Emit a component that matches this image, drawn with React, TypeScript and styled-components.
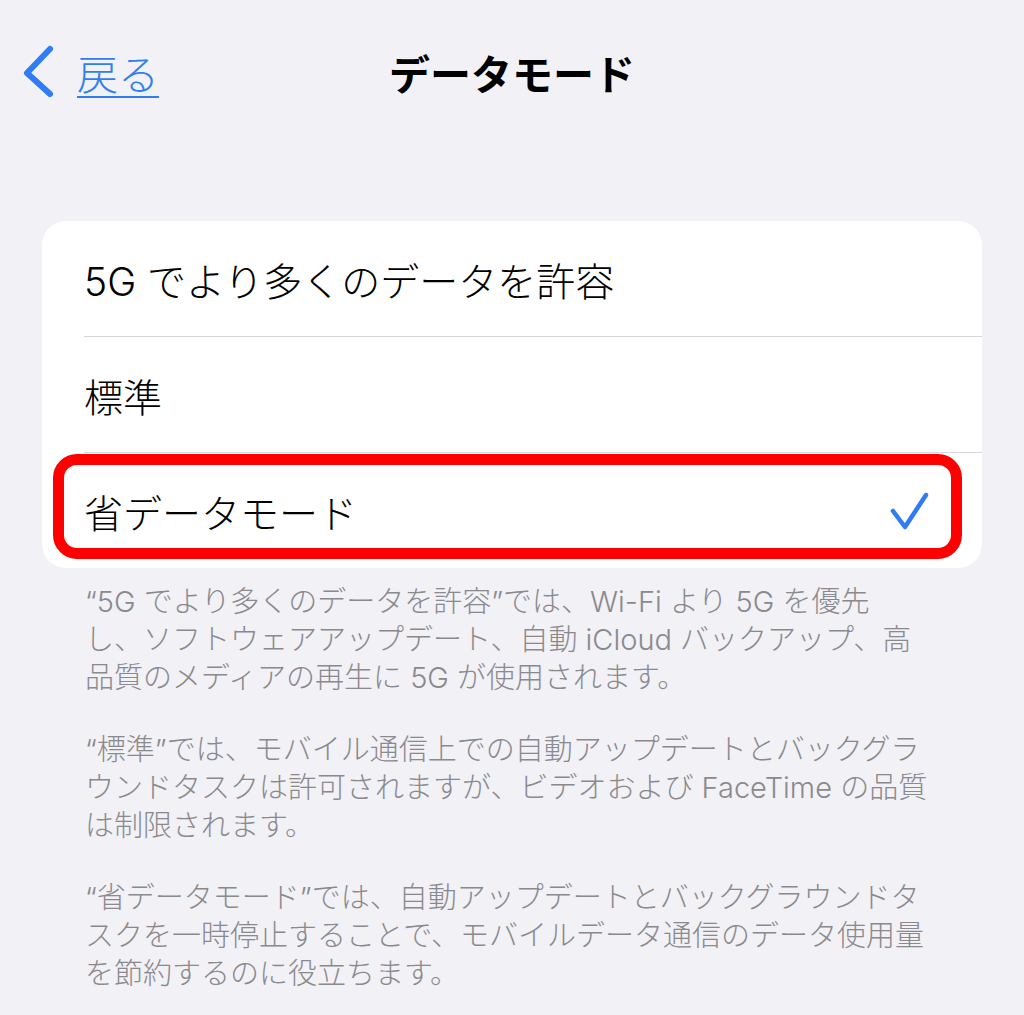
import { FC } from "react";
import styled, { createGlobalStyle } from "styled-components";

const GlobalStyle = createGlobalStyle`
  body {
    margin: 0;
    background: #f2f1f6;
    font-family: Inter, "Noto Sans CJK JP", sans-serif;
    -webkit-font-smoothing: antialiased;
  }
`;

type Option = { label: string; selected?: boolean };

const options: Option[] = [
  { label: "5G でより多くのデータを許容" },
  { label: "標準" },
  { label: "省データモード", selected: true },
];

const notes: string[][] = [
  [
    "“5G でより多くのデータを許容”では、Wi-Fi より 5G を優先",
    "し、ソフトウェアアップデート、自動 iCloud バックアップ、高",
    "品質のメディアの再生に 5G が使用されます。",
  ],
  [
    "“標準”では、モバイル通信上での自動アップデートとバックグラ",
    "ウンドタスクは許可されますが、ビデオおよび FaceTime の品質",
    "は制限されます。",
  ],
  [
    "“省データモード”では、自動アップデートとバックグラウンドタ",
    "スクを一時停止することで、モバイルデータ通信のデータ使用量",
    "を節約するのに役立ちます。",
  ],
];

const ChevronLeft: FC = () => (
  <svg width="34" height="54" viewBox="0 0 34 54" fill="none">
    <path
      d="M28 4 L5 28 L28 49"
      stroke="#2f7cf6"
      strokeWidth="6"
      strokeLinecap="round"
      strokeLinejoin="round"
    />
  </svg>
);

const Check: FC = () => (
  <svg width="44" height="44" viewBox="0 0 44 44" fill="none">
    <path
      d="M5 22 L17 38 L38 6"
      stroke="#2f7cf6"
      strokeWidth="4.5"
      strokeLinecap="round"
      strokeLinejoin="round"
    />
  </svg>
);

export default function App() {
  return (
    <>
      <GlobalStyle />
      <SPage>
        <SNavBar>
          <SBack>
            <ChevronLeft />
            <SBackLabel>戻る</SBackLabel>
          </SBack>
          <STitle>データモード</STitle>
          <span />
        </SNavBar>

        <SCard>
          {options.map((opt, i) => (
            <SRow key={opt.label}>
              <SRowInner $last={i === options.length - 1}>
                <SLabel>{opt.label}</SLabel>
                {opt.selected && <Check />}
              </SRowInner>
              {opt.selected && <SHighlight />}
            </SRow>
          ))}
        </SCard>

        <SFooter>
          {notes.map((lines, i) => (
            <SNote key={i}>
              {lines.map((line, j) => (
                <span key={j}>
                  {line}
                  {j < lines.length - 1 && <br />}
                </span>
              ))}
            </SNote>
          ))}
        </SFooter>
      </SPage>
    </>
  );
}

const SPage = styled.div`
  display: flex;
  flex-direction: column;
  min-height: 1015px;
`;

const SNavBar = styled.header`
  display: grid;
  grid-template-columns: 1fr auto 1fr;
  align-items: center;
  height: 144px;
`;

const SBack = styled.a`
  display: flex;
  align-items: center;
  gap: 21px;
  padding-left: 22px;
  cursor: pointer;
`;

const SBackLabel = styled.span`
  font-size: 41px;
  font-weight: 300;
  color: #2f7ff0;
  text-decoration: underline;
  text-decoration-thickness: 2px;
  text-underline-offset: 6px;
`;

const STitle = styled.h1`
  margin: 0;
  font-size: 41px;
  font-weight: 700;
  color: #000;
`;

const SCard = styled.div`
  margin: 77px 42px 0;
  background: #fff;
  border-radius: 24px;
`;

const SRow = styled.div`
  position: relative;
  display: flex;
  padding-left: 42px;
`;

const SRowInner = styled.div<{ $last: boolean }>`
  flex: 1;
  display: flex;
  align-items: center;
  justify-content: space-between;
  height: 115px;
  padding-right: 50px;
  border-bottom: ${(p) => (p.$last ? "none" : "1px solid #d6d6db")};
`;

const SLabel = styled.span`
  font-size: 39px;
  font-weight: 300;
  color: #000;
`;

const SHighlight = styled.div`
  position: absolute;
  left: 11px;
  right: 20px;
  top: 1px;
  bottom: 9px;
  border: 11px solid #ff0000;
  border-radius: 24px;
  pointer-events: none;
`;

const SFooter = styled.div`
  display: flex;
  flex-direction: column;
  gap: 34px;
  padding: 15px 20px 0 85px;
`;

const SNote = styled.p`
  margin: 0;
  font-size: 29px;
  font-weight: 300;
  line-height: 38px;
  color: #8a8a8e;
  white-space: nowrap;
`;
